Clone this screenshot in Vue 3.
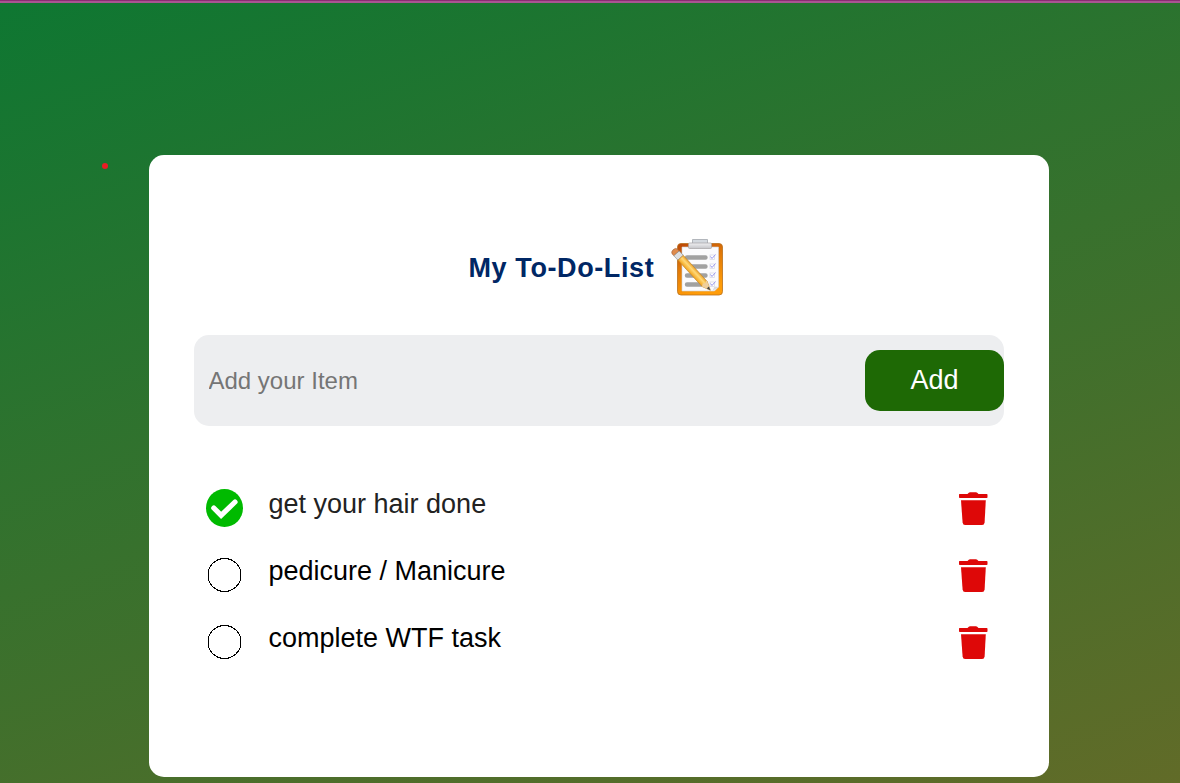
<script setup>
import { ref } from 'vue'

const draft = ref('')
const items = ref([
  { text: 'get your hair done', done: true },
  { text: 'pedicure / Manicure', done: false },
  { text: 'complete WTF task', done: false },
])

function add() {
  if (!draft.value.trim()) return
  items.value.push({ text: draft.value.trim(), done: false })
  draft.value = ''
}
</script>

<template>
  <div class="page">
    <span class="marker"></span>
    <main class="card">
      <header class="heading">
        <h1>My To-Do-List</h1>
        <svg class="clipboard" viewBox="0 0 54 60">
          <defs>
            <linearGradient id="board" x1="0" y1="0" x2="0.35" y2="1">
              <stop offset="0" stop-color="#b94508" />
              <stop offset="0.45" stop-color="#e07808" />
              <stop offset="1" stop-color="#ff9c08" />
            </linearGradient>
            <linearGradient id="clip" x1="0" y1="0" x2="0" y2="1">
              <stop offset="0" stop-color="#f0f0f2" />
              <stop offset="1" stop-color="#c4c4c8" />
            </linearGradient>
            <linearGradient id="wood" x1="0" y1="0" x2="1" y2="0">
              <stop offset="0" stop-color="#f3a31c" />
              <stop offset="0.6" stop-color="#ffd978" />
              <stop offset="1" stop-color="#eda32c" />
            </linearGradient>
          </defs>
          <rect x="6.5" y="5.5" width="45" height="51.5" rx="3.5" fill="url(#board)" stroke="#b9701c" stroke-width=".8" />
          <path d="M11 9H47.5V49L43.5 53H11Z" fill="#fbfbfd" stroke="#cfd0d6" stroke-width=".6" />
          <path d="M41.5 53L43.5 48.5L47.5 49Z" fill="#d7d8de" />
          <path d="M21.5 1.5H36.5V6H21.5Z" fill="#d4d9df" stroke="#a3a8ae" stroke-width=".8" />
          <rect x="17.5" y="5" width="23" height="5.5" rx="1" fill="url(#clip)" stroke="#a5a2a4" stroke-width=".7" />
          <g stroke="#a1a1a1" stroke-width="4.4" stroke-linecap="round">
            <path d="M16 19.5H34.5M16 28.5H34.5M16 37.5H34.5M16 46.5H34.5" />
          </g>
          <g fill="#fff" stroke="#d3d5e2" stroke-width=".7">
            <rect x="39" y="17" width="4.5" height="4.5" />
            <rect x="39" y="26" width="4.5" height="4.5" />
            <rect x="39" y="35" width="4.5" height="4.5" />
            <rect x="39" y="44" width="4.5" height="4.5" />
          </g>
          <path
            d="M39.5 18.5L41 20.5L44.5 16.5M39.5 27.5L41 29.5L44.5 25.5M39.5 36.5L41 38.5L44.5 34.5M39.5 45.5L41 47.5L44.5 43.5"
            fill="none" stroke="#9a98ec" stroke-width="1"
          />
          <g transform="translate(3.2 12.8) rotate(-42.5)">
            <path d="M-3.6 1Q-3.3 -1.5 0 -1.5Q3.3 -1.5 3.6 1V3.5H-3.6Z" fill="#df8b4c" stroke="#a0623c" stroke-width=".6" />
            <path d="M-3.6 3.5H3.6V9.5H-3.6Z" fill="#dddfe2" stroke="#8d8d8d" stroke-width=".6" />
            <path d="M-3.6 9.5H3.6V45L0 53.5L-3.6 45Z" fill="url(#wood)" stroke="#b98230" stroke-width=".6" />
            <path d="M-3.6 45L-1 43.5L1 45L3.6 43.5V45L0 53.5Z" fill="#efcf9c" />
            <path d="M-1.4 49.8L1.4 49.8L0 53.5Z" fill="#444" />
          </g>
        </svg>
      </header>

      <form class="entry" @submit.prevent="add">
        <input v-model="draft" placeholder="Add your Item" />
        <button type="submit">Add</button>
      </form>

      <ul class="items">
        <li v-for="item in items" :key="item.text" :class="{ done: item.done }">
          <svg class="status" viewBox="0 0 40 40" @click="item.done = !item.done">
            <g v-if="item.done">
              <ellipse cx="20.5" cy="20" rx="18.5" ry="19" fill="#00ba00" />
              <path d="M9.8 20L17.1 27.4L31 14" fill="none" stroke="#fff" stroke-width="5.2" stroke-linecap="round" />
            </g>
            <circle v-else cx="20.5" cy="20" r="16.5" fill="#fff" stroke="#000" shape-rendering="crispEdges" />
          </svg>
          <span class="label">{{ item.text }}</span>
          <svg class="trash" viewBox="0 0 30 34">
            <path d="M1.5 2H9.5L10.8 .8Q11.3 .3 12 .3H18Q18.7 .3 19.2 .8L20.5 2H28.7Q29.5 2 29.5 2.8V5.2Q29.5 6 28.7 6H1.8Q1 6 1 5.2V2.8Q1 2 1.5 2Z" />
            <path d="M3 8.3H27.8L26.6 30.5Q26.3 33 24.1 33H7.1Q4.9 33 4.6 30.5Z" />
          </svg>
        </li>
      </ul>
    </main>
  </div>
</template>

<style>
body {
  margin: 0;
  overflow: hidden;
}
</style>

<style scoped>
.page {
  position: relative;
  box-sizing: border-box;
  height: 783px;
  padding: 152px 0 0 149px;
  border-top: 3px solid #a95592;
  background: linear-gradient(161deg, #0e7732, #616b28) border-box;
  font-family: "Liberation Sans", Arial, sans-serif;
}
.page::before {
  content: "";
  position: absolute;
  top: -3px;
  left: 0;
  right: 0;
  height: 1px;
  background: #8b2c73;
}
.marker {
  position: absolute;
  left: 102px;
  top: 160px;
  width: 6px;
  height: 6px;
  border-radius: 50%;
  background: #ed1c24;
}
.card {
  box-sizing: border-box;
  width: 900px;
  height: 622px;
  padding: 83px 45px 0;
  border-radius: 15px;
  background: #fff;
}
.heading {
  display: flex;
  align-items: center;
  height: 60px;
  padding-left: 274.5px;
}
h1 {
  width: 202.5px;
  margin: 0;
  color: #002765;
  font-size: 27px;
  line-height: 31px;
  letter-spacing: 0.6px;
  white-space: nowrap;
}
.clipboard {
  width: 54px;
  height: 60px;
}
.entry {
  display: flex;
  align-items: center;
  height: 91px;
  margin-top: 37px;
  border-radius: 15px;
  background: #edeef0;
}
input {
  flex: 1;
  min-width: 0;
  padding: 0 14.5px;
  border: 0;
  outline: 0;
  background: transparent;
  font: 24px "Liberation Sans", Arial, sans-serif;
}
input::placeholder {
  color: #757575;
}
button {
  width: 139px;
  height: 61px;
  padding: 0;
  border: 0;
  border-radius: 15px;
  background: #1e6905;
  color: #fff;
  font: 27px "Liberation Sans", Arial, sans-serif;
}
.items {
  margin: 48px 0 0;
  padding: 0 16px 0 10px;
  list-style: none;
}
li {
  display: flex;
  align-items: center;
  height: 67px;
}
.status {
  width: 40px;
  height: 40px;
}
.label {
  flex: 1;
  margin-left: 24.5px;
  padding-bottom: 6px;
  color: #000;
  font-size: 27px;
  line-height: 31px;
}
.done .label {
  color: #222;
}
.trash {
  width: 30px;
  height: 34px;
  margin-top: 2px;
  fill: #de0808;
}
</style>
